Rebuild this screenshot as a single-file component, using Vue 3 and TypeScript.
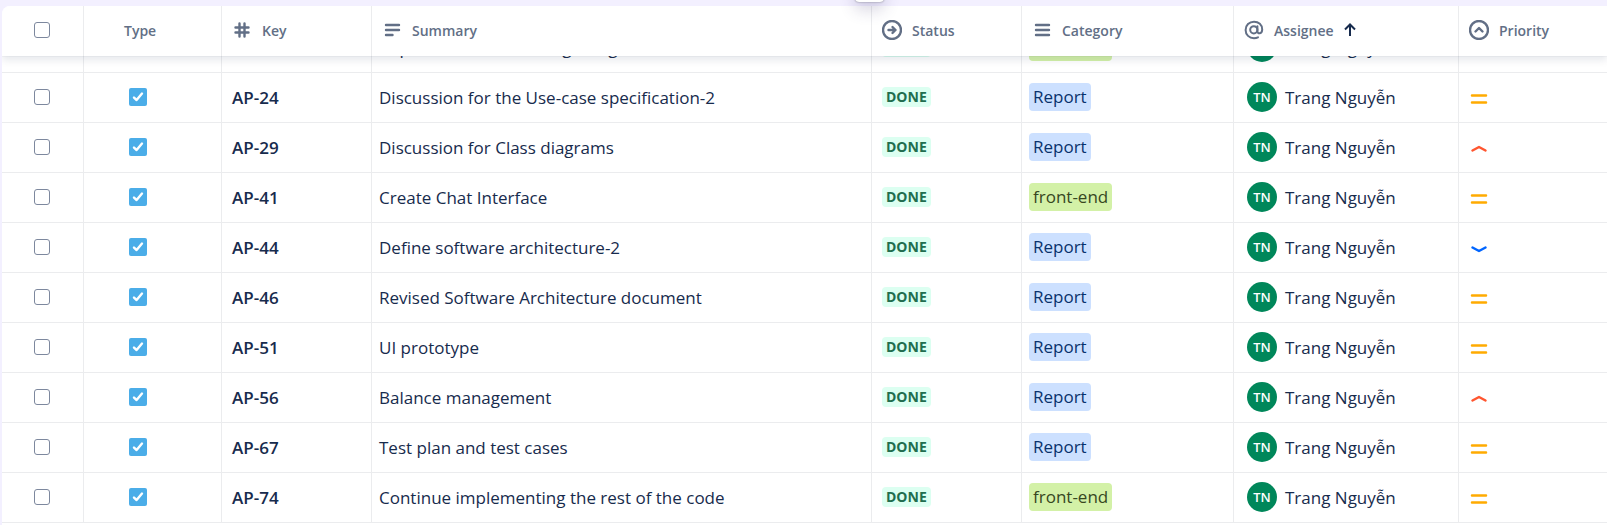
<script setup lang="ts">
import { onMounted, ref } from 'vue'

type Priority = 'high' | 'medium' | 'low'
type Category = 'Report' | 'front-end'

interface Issue {
  key: string
  summary: string
  category: Category
  priority?: Priority
}

interface Column {
  id: string
  label: string
}

const columns: Column[] = [
  { id: 'type', label: 'Type' },
  { id: 'key', label: 'Key' },
  { id: 'summary', label: 'Summary' },
  { id: 'status', label: 'Status' },
  { id: 'category', label: 'Category' },
  { id: 'assignee', label: 'Assignee' },
  { id: 'priority', label: 'Priority' },
]

const issues: Issue[] = [
  { key: 'AP-19', summary: 'Implement new chatting design', category: 'front-end' },
  { key: 'AP-24', summary: 'Discussion for the Use-case specification-2', category: 'Report', priority: 'medium' },
  { key: 'AP-29', summary: 'Discussion for Class diagrams', category: 'Report', priority: 'high' },
  { key: 'AP-41', summary: 'Create Chat Interface', category: 'front-end', priority: 'medium' },
  { key: 'AP-44', summary: 'Define software architecture-2', category: 'Report', priority: 'low' },
  { key: 'AP-46', summary: 'Revised Software Architecture document', category: 'Report', priority: 'medium' },
  { key: 'AP-51', summary: 'UI prototype', category: 'Report', priority: 'medium' },
  { key: 'AP-56', summary: 'Balance management', category: 'Report', priority: 'high' },
  { key: 'AP-67', summary: 'Test plan and test cases', category: 'Report', priority: 'medium' },
  { key: 'AP-74', summary: 'Continue implementing the rest of the code', category: 'front-end', priority: 'medium' },
]

const priorityPaths: Record<Priority, string> = {
  high: 'M3.5 11.5 10 8 16.5 11.5',
  medium: 'M3 6.5H17M3 13.5H17',
  low: 'M3.5 8.5 10 12 16.5 8.5',
}

const scroller = ref<HTMLElement | null>(null)

onMounted(() => {
  // Open the list part-way through its first row.
  if (scroller.value) scroller.value.scrollTop = 33
})
</script>

<template>
  <main class="page">
    <div class="floating-handle" aria-hidden="true"></div>
    <div ref="scroller" class="scroller">
      <table class="issues">
        <colgroup>
          <col class="col-select" />
          <col v-for="c in columns" :key="c.id" :class="`col-${c.id}`" />
        </colgroup>
        <thead>
          <tr>
            <th class="select" scope="col">
              <input class="tick" type="checkbox" aria-label="Select all issues" />
            </th>
            <th v-for="c in columns" :key="c.id" scope="col" :class="c.id">
              <div class="head">
                <svg v-if="c.id === 'key'" class="icon" viewBox="0 0 20 20" aria-hidden="true">
                  <path d="M7.5 3.5V16.5M12.5 3.5V16.5M3.5 7.5H16.5M3.5 12.5H16.5" />
                </svg>
                <svg v-else-if="c.id === 'summary'" class="icon" viewBox="0 0 20 20" aria-hidden="true">
                  <path d="M4 5H17M4 10H17M4 15H10.5" />
                </svg>
                <svg v-else-if="c.id === 'status'" class="icon" viewBox="0 0 20 20" aria-hidden="true">
                  <circle cx="10" cy="10" r="9" />
                  <path d="M6.5 10H13.5M10.5 7 13.5 10 10.5 13" />
                </svg>
                <svg v-else-if="c.id === 'category'" class="icon" viewBox="0 0 20 20" aria-hidden="true">
                  <path d="M4 5H17M4 10H17M4 15H17" />
                </svg>
                <svg v-else-if="c.id === 'assignee'" class="icon thin" viewBox="0 0 20 20" aria-hidden="true">
                  <circle cx="9.8" cy="9.8" r="3.6" />
                  <path d="M13.4 6.2V11.2C13.4 14.4 18.2 14 18.2 9.4C18.2 4.8 14.6 1.7 10 1.7C5.2 1.7 1.6 5.2 1.6 10C1.6 14.8 5.2 18.2 10 18.2C11.6 18.2 12.8 17.9 14 17.3" />
                </svg>
                <svg v-else-if="c.id === 'priority'" class="icon" viewBox="0 0 20 20" aria-hidden="true">
                  <circle cx="10" cy="10" r="9" />
                  <path d="M6.5 11.5 10 8 13.5 11.5" />
                </svg>
                <span class="label">{{ c.label }}</span>
                <svg v-if="c.id === 'assignee'" class="sort" viewBox="0 0 12 14" aria-hidden="true">
                  <path d="M6 13V2M1 6.5 6 1.5 11 6.5" />
                </svg>
              </div>
            </th>
          </tr>
        </thead>
        <tbody>
          <tr v-for="issue in issues" :key="issue.key">
            <td class="select">
              <input class="tick" type="checkbox" :aria-label="`Select ${issue.key}`" />
            </td>
            <td class="type">
              <svg class="task" viewBox="0 0 18 18" role="img" aria-label="Task">
                <rect width="18" height="18" rx="2" />
                <path d="M5 9.6 7.6 12 13 5.6" />
              </svg>
            </td>
            <td class="key">{{ issue.key }}</td>
            <td class="summary">{{ issue.summary }}</td>
            <td class="status"><span class="lozenge">DONE</span></td>
            <td class="category">
              <span class="tag" :class="issue.category === 'Report' ? 'blue' : 'lime'">{{ issue.category }}</span>
            </td>
            <td class="assignee">
              <div class="person">
                <span class="avatar" aria-hidden="true">TN</span>
                <span class="name">Trang Nguyễn</span>
              </div>
            </td>
            <td class="priority">
              <svg
                v-if="issue.priority"
                class="level"
                :class="issue.priority"
                viewBox="0 0 20 20"
                role="img"
                :aria-label="issue.priority"
              >
                <path :d="priorityPaths[issue.priority]" />
              </svg>
            </td>
          </tr>
        </tbody>
      </table>
    </div>
  </main>
</template>

<style>
body {
  margin: 0;
  background: #f3f0ff;
}
</style>

<style scoped>
.page {
  box-sizing: border-box;
  display: flex;
  height: 100vh;
  padding: 6px 0 0 2px;
  overflow: hidden;
  position: relative;
  font-family: "Open Sans", "Noto Sans", sans-serif;
  font-size: 17px;
  line-height: 24px;
  color: #172b4d;
}

.floating-handle {
  position: absolute;
  z-index: 3;
  top: -26px;
  left: 855px;
  width: 29px;
  height: 28px;
  border-radius: 4px;
  background: #fff;
  box-shadow: 0 8px 16px rgba(60, 50, 110, 0.2), 0 0 2px rgba(30, 31, 33, 0.5);
}

.scroller {
  flex: 1;
  min-width: 0;
  overflow: auto;
  scrollbar-width: none;
  padding-bottom: 48px;
  border-top-left-radius: 8px;
  background: #fff;
}

.issues {
  width: 100%;
  table-layout: fixed;
  border-collapse: separate;
  border-spacing: 0;
}

.col-select { width: 82px; }
.col-type { width: 138px; }
.col-key { width: 150px; }
.col-summary { width: 500px; }
.col-status { width: 150px; }
.col-category { width: 212px; }
.col-assignee { width: 225px; }

thead {
  position: sticky;
  top: 0;
  z-index: 2;
  box-shadow: 0 0 1px rgba(9, 30, 66, 0.2), 0 4px 8px rgba(9, 30, 66, 0.1);
}

th,
td {
  box-sizing: border-box;
  height: 50px;
  padding: 0 8px 1px;
  border-right: 1px solid #ebecee;
  text-align: left;
  vertical-align: middle;
  white-space: nowrap;
  overflow: hidden;
}

th {
  background: #fff;
  padding-bottom: 2px;
  font-size: 14px;
  font-weight: 600;
  line-height: 20px;
  color: #626f86;
}

td {
  border-bottom: 1px solid #ebecee;
}

th:last-child,
td:last-child {
  border-right: 0;
}

.select {
  padding-left: 32px;
}

th.type {
  padding-left: 40px;
}

td.type {
  padding-left: 45px;
}

.tick {
  appearance: none;
  display: block;
  box-sizing: border-box;
  width: 16px;
  height: 16px;
  margin: 0;
  border: 1px solid #7d889e;
  border-radius: 3px;
  background: #fff;
}

.head {
  display: flex;
  align-items: center;
  gap: 10px;
}

.label {
  padding-top: 2px;
}

th.key,
th.summary,
th.status,
th.category,
th.assignee,
th.priority,
td.key,
td.status,
td.priority {
  padding-left: 10px;
}

td.category {
  padding-left: 7px;
}

td.assignee {
  padding-left: 13px;
}

td.key,
td.summary,
.name {
  padding-top: 2px;
}

td.summary {
  padding-left: 7px;
}

td.priority {
  padding-top: 4px;
}

.icon {
  flex: none;
  width: 20px;
  height: 20px;
  fill: none;
  stroke: #626f86;
  stroke-width: 2.4;
  stroke-linecap: round;
  stroke-linejoin: round;
}

.icon.thin {
  stroke-width: 2;
}

.sort {
  width: 12px;
  height: 14px;
  fill: none;
  stroke: #172b4d;
  stroke-width: 2;
}

.task {
  display: block;
  width: 18px;
  height: 18px;
  fill: #4bade8;
}

.task path {
  fill: none;
  stroke: #fff;
  stroke-width: 2.4;
  stroke-linecap: round;
  stroke-linejoin: round;
}

td.key {
  font-weight: 600;
}

.lozenge {
  display: block;
  width: fit-content;
  padding: 0 4px;
  border-radius: 4px;
  background: #dcfff1;
  font-size: 14px;
  font-weight: 700;
  line-height: 20px;
  color: #216e4e;
}

.tag {
  display: block;
  width: fit-content;
  padding: 2px 4px;
  border-radius: 4px;
}

.tag.blue {
  background: #cce0ff;
  color: #09326c;
}

.tag.lime {
  background: #d3f1a7;
  color: #37471f;
}

.person {
  display: flex;
  align-items: center;
  gap: 8px;
}

.avatar {
  width: 30px;
  height: 30px;
  border-radius: 50%;
  background: #00875a;
  font-size: 13px;
  font-weight: 600;
  line-height: 30px;
  text-align: center;
  color: #fff;
}

.level {
  display: block;
  width: 20px;
  height: 20px;
  fill: none;
  stroke-width: 2.5;
  stroke-linecap: round;
  stroke-linejoin: round;
}

.level.high { stroke: #ff5630; }
.level.medium { stroke: #ffab00; }
.level.low { stroke: #0065ff; }
</style>
